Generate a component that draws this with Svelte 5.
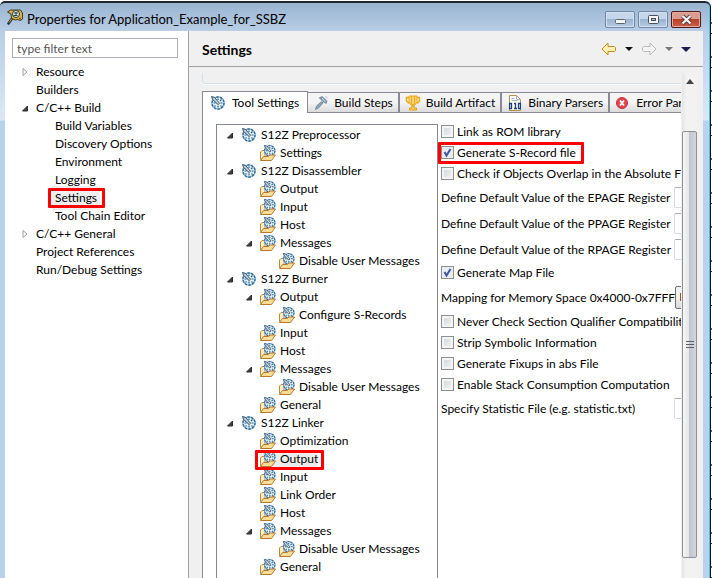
<script lang="ts">
	type Row = { label: string; level: number; open?: boolean; closed?: boolean; marked?: boolean };
	type Option = { id: string; kind: 'check' | 'text' | 'combo'; label: string; on?: boolean; marked?: boolean };

	let filter = $state('');

	const pages: Row[] = [
		{ label: 'Resource', level: 0, closed: true },
		{ label: 'Builders', level: 0 },
		{ label: 'C/C++ Build', level: 0, open: true },
		{ label: 'Build Variables', level: 1 },
		{ label: 'Discovery Options', level: 1 },
		{ label: 'Environment', level: 1 },
		{ label: 'Logging', level: 1 },
		{ label: 'Settings', level: 1, marked: true },
		{ label: 'Tool Chain Editor', level: 1 },
		{ label: 'C/C++ General', level: 0, closed: true },
		{ label: 'Project References', level: 0 },
		{ label: 'Run/Debug Settings', level: 0 }
	];

	const tools: Row[] = [
		{ label: 'S12Z Preprocessor', level: 0, open: true },
		{ label: 'Settings', level: 1 },
		{ label: 'S12Z Disassembler', level: 0, open: true },
		{ label: 'Output', level: 1 },
		{ label: 'Input', level: 1 },
		{ label: 'Host', level: 1 },
		{ label: 'Messages', level: 1, open: true },
		{ label: 'Disable User Messages', level: 2 },
		{ label: 'S12Z Burner', level: 0, open: true },
		{ label: 'Output', level: 1, open: true },
		{ label: 'Configure S-Records', level: 2 },
		{ label: 'Input', level: 1 },
		{ label: 'Host', level: 1 },
		{ label: 'Messages', level: 1, open: true },
		{ label: 'Disable User Messages', level: 2 },
		{ label: 'General', level: 1 },
		{ label: 'S12Z Linker', level: 0, open: true },
		{ label: 'Optimization', level: 1 },
		{ label: 'Output', level: 1, marked: true },
		{ label: 'Input', level: 1 },
		{ label: 'Link Order', level: 1 },
		{ label: 'Host', level: 1 },
		{ label: 'Messages', level: 1, open: true },
		{ label: 'Disable User Messages', level: 2 },
		{ label: 'General', level: 1 }
	];

	let options: Option[] = $state([
		{ id: 'rom', kind: 'check', label: 'Link as ROM library' },
		{ id: 'srec', kind: 'check', label: 'Generate S-Record file', on: true, marked: true },
		{ id: 'overlap', kind: 'check', label: 'Check if Objects Overlap in the Absolute File' },
		{ id: 'epage', kind: 'text', label: 'Define Default Value of the EPAGE Register' },
		{ id: 'ppage', kind: 'text', label: 'Define Default Value of the PPAGE Register' },
		{ id: 'rpage', kind: 'text', label: 'Define Default Value of the RPAGE Register' },
		{ id: 'map', kind: 'check', label: 'Generate Map File', on: true },
		{ id: 'space', kind: 'combo', label: 'Mapping for Memory Space 0x4000-0x7FFF' },
		{ id: 'qualifier', kind: 'check', label: 'Never Check Section Qualifier Compatibility' },
		{ id: 'strip', kind: 'check', label: 'Strip Symbolic Information' },
		{ id: 'fixups', kind: 'check', label: 'Generate Fixups in abs File' },
		{ id: 'stack', kind: 'check', label: 'Enable Stack Consumption Computation' },
		{ id: 'stat', kind: 'text', label: 'Specify Statistic File (e.g. statistic.txt)' }
	]);

	const tabs = [
		{ id: 'tool', label: 'Tool Settings' },
		{ id: 'steps', label: 'Build Steps' },
		{ id: 'artifact', label: 'Build Artifact' },
		{ id: 'binary', label: 'Binary Parsers' },
		{ id: 'error', label: 'Error Parsers' }
	];
	let tab = $state('tool');
</script>

{#snippet dial()}
	<circle cx="8" cy="8" r="6.200" fill="#e2f0f8" stroke="#86aeca" stroke-width="1.200" />
	<circle cx="8" cy="8" r="6" stroke="#2f6c96" stroke-width="1.400" stroke-dasharray="2.400 1.300" />
	<path d="M8 3.500v1.500M12.500 8h-2M8 12.500v-2M3.500 8h2M11.500 4.500l-1.500 1.500M11.500 11.500l-1-1M4.500 11.500l1-1" stroke="#2f668c" stroke-width="1.200" />
	<path d="M1.500 1.500l3 .8 5 6-1.500 1.200-5.500-5z" fill="#9db4c4" stroke="#2b4c66" stroke-width=".9" />
	<path d="M3.500 3l5 5.500" stroke="#fff" stroke-width=".7" />
{/snippet}

{#snippet toolIcon()}
	<svg class="icon" viewBox="0 0 16 16" aria-hidden="true">{@render dial()}</svg>
{/snippet}

{#snippet folderIcon()}
	<svg class="icon" viewBox="0 0 16 16" aria-hidden="true">
		<path d="M.5 14.500V7l1.500-1.500h3v9z" fill="#fdeec4" stroke="#c08a3c" />
		<g transform="translate(3 -1) scale(.85)">{@render dial()}</g>
		<path d="M.5 15.500L3.500 11.500h5l1.500-1.500h5.500L11.500 15.500z" fill="#f9dc98" stroke="#b9792c" stroke-linejoin="round" />
	</svg>
{/snippet}

{#snippet twisty(row: Row)}
	<span class="twisty">
		{#if row.open}
			<button type="button" aria-label="Collapse {row.label}">
				<svg viewBox="0 0 8 8"><path d="M6.500 2v5H1.500z" fill="#404040" stroke="#2c2c2c" /></svg>
			</button>
		{:else if row.closed}
			<button type="button" aria-label="Expand {row.label}">
				<svg viewBox="0 0 8 8"><path d="M2 .5v7L6 4z" fill="#fff" stroke="#a0a0a0" /></svg>
			</button>
		{/if}
	</span>
{/snippet}

<div class="desktop">
	<div class="dialog" role="dialog" aria-labelledby="title">
		<header class="titlebar">
			<svg class="app-icon" viewBox="0 0 16 16" aria-hidden="true">
				<path d="M1.500 14.500l3.500-5" stroke="#23313a" stroke-width="2.600" stroke-linecap="round" />
				<path d="M2 13.500l3-4" stroke="#d8a520" stroke-width="1" />
				<path d="M.5 3l3-2h10l2 3v6l-2 1.500-3-1-2 .5-4-1.500L4 5z" fill="#d9b13c" stroke="#3c3a22" />
				<circle cx="9" cy="5" r="3.500" fill="#e9edda" stroke="#2b3b43" />
				<path d="M7 4h4M9 3v4M6.500 6.500h4M12 9l2.500 1.500" stroke="#28404e" />
			</svg>
			<h1 id="title">Properties for Application_Example_for_SSBZ</h1>
			<div class="win-buttons">
				<button type="button" aria-label="Minimize">
					<svg viewBox="0 0 28 15"><rect x="9.500" y="7.500" width="10" height="4" rx="1" fill="#f5f5f5" stroke="#5a6673" /></svg>
				</button>
				<button type="button" aria-label="Maximize">
					<svg viewBox="0 0 28 15">
						<rect x="9.500" y="3.500" width="10" height="8" rx="1" fill="#f5f5f5" stroke="#46525f" />
						<rect x="12.500" y="6.500" width="4" height="2" fill="#9fb8d4" stroke="#46525f" />
					</svg>
				</button>
				<button type="button" class="close" aria-label="Close">
					<svg viewBox="0 0 28 15">
						<path d="M10.500 4l8 7.500M18.500 4l-8 7.500" stroke="#4d3b40" stroke-width="4" />
						<path d="M10.500 4l8 7.500M18.500 4l-8 7.500" stroke="#f4f4f4" stroke-width="2.300" />
					</svg>
				</button>
			</div>
		</header>

		<div class="body">
			<nav class="pages">
				<input class="filter" type="text" aria-label="Filter" placeholder="type filter text" bind:value={filter} />
				<ul class="tree">
					{#each pages as row}
						<li class="row level-{row.level}">
							{@render twisty(row)}
							<span class="label" class:marked={row.marked}>{row.label}</span>
						</li>
					{/each}
				</ul>
			</nav>

			<main>
				<div class="page-head">
					<h2>Settings</h2>
					<div class="history">
						<button type="button" aria-label="Back">
							<svg width="16" height="14" viewBox="0 0 16 14"><path d="M1 7l6-6v3.500h6.500l1 1v3l-1 1H7V13z" fill="#fdf0b4" stroke="#c08a1e" stroke-linejoin="round" /></svg>
						</button>
						<button type="button" aria-label="Back history">
							<svg width="8" height="14" viewBox="0 0 8 14"><path d="M0 5h8L4 9z" fill="#111" /></svg>
						</button>
						<button type="button" aria-label="Forward" disabled>
							<svg width="16" height="14" viewBox="0 0 16 14"><path d="M15 7L9 1v3.500H2.500l-1 1v3l1 1H9V13z" fill="#f4f4f4" stroke="#b9b9b9" stroke-linejoin="round" /></svg>
						</button>
						<button type="button" aria-label="Forward history" disabled>
							<svg width="8" height="14" viewBox="0 0 8 14"><path d="M0 5h8L4 9z" fill="#777" /></svg>
						</button>
						<button type="button" aria-label="View menu">
							<svg width="10" height="14" viewBox="0 0 10 14"><path d="M0 5h10L5 10z" fill="#1e1c50" /></svg>
						</button>
					</div>
				</div>

				<div class="scroller">
					<div class="content">
						<div class="group-end"></div>
						<div class="tabs" role="tablist">
							{#each tabs as t}
								<button type="button" role="tab" class="tab" class:selected={tab === t.id} aria-selected={tab === t.id} onclick={() => (tab = t.id)}>
									{#if t.id === 'tool'}
										{@render toolIcon()}
									{:else if t.id === 'steps'}
										<svg class="icon" viewBox="0 0 16 16" aria-hidden="true">
											<path d="M2.500 14.500l1-3.500 5-4.500 1.500 1.500-4.500 5z" fill="#8da2b3" stroke="#7890a3" />
											<path d="M5.500 3L9 1l3 2.500 2.500 2.500-1 3-3-1.500-3-3z" fill="#7d94a6" />
											<path d="M10 2l3.500 4.500M12.500 1l2.500 3" stroke="#8ea5b5" stroke-dasharray="1 1" />
											<path d="M9 3l3 3.500" stroke="#dfe8ee" />
										</svg>
									{:else if t.id === 'artifact'}
										<svg class="icon" viewBox="0 0 16 16" aria-hidden="true">
											<path d="M4 2.500H1.500V6L4 8.500M12 2.500h2.500V6L12 8.500" fill="none" stroke="#eba91f" stroke-width="1.500" />
											<path d="M4 1h8v6l-2 3H6L4 7z" fill="#fbd56b" stroke="#eba91f" />
											<path d="M6.500 1v8M9.500 1v8" stroke="#eba91f" />
											<path d="M7 10h2v3h2.500v2h-7v-2H7z" fill="#fbd56b" stroke="#e09b12" />
										</svg>
									{:else if t.id === 'binary'}
										<svg class="icon" viewBox="0 0 16 16" aria-hidden="true">
											<path d="M2.500.5h7l4 4v11h-11z" fill="#fffdf2" stroke="#b0914d" />
											<path d="M9.500.5v4h4M4.500 3.500h3M4.500 5.500h6" fill="none" stroke="#9fb4cc" />
											<rect x="1" y="8" width="14" height="6" fill="#fff" />
											<path d="M2.500 8.500h2v5h-2zM7 8.500h1.500v5M7 13.500h3M11.500 8.500h2v5h-2z" fill="none" stroke="#1f3f77" stroke-width="1.300" />
										</svg>
									{:else}
										<svg class="icon" viewBox="0 0 16 16" aria-hidden="true">
											<circle cx="7" cy="8" r="5.500" fill="#e0454f" stroke="#c9303b" />
											<path d="M5 5.500l4 5M9 5.500l-4 5" stroke="#fff" stroke-width="1.800" />
										</svg>
									{/if}
									<span>{t.label}</span>
								</button>
							{/each}
						</div>

						<div class="panel">
							<ul class="tree tools">
								{#each tools as row}
									<li class="row level-{row.level}">
										{@render twisty(row)}
										<span class="item" class:marked={row.marked}>
											{#if row.level === 0}{@render toolIcon()}{:else}{@render folderIcon()}{/if}
											<span class="label">{row.label}</span>
										</span>
									</li>
								{/each}
							</ul>

							<form class="options">
								{#each options as o}
									{#if o.kind === 'check'}
										<div class="check">
											<label class:marked={o.marked}>
												<input type="checkbox" bind:checked={o.on} />
												<span>{o.label}</span>
											</label>
										</div>
									{:else}
										<div class="field" class:combo={o.kind === 'combo'}>
											<label for={o.id}>{o.label}</label>
											{#if o.kind === 'text'}
												<input id={o.id} type="text" />
											{:else}
												<select id={o.id}><option>ROM</option></select>
											{/if}
										</div>
									{/if}
								{/each}
							</form>
						</div>
					</div>

					<div class="scrollbar" aria-hidden="true">
						<div class="arrow"><svg width="8" height="5" viewBox="0 0 8 5"><path d="M0 5h8L4 0z" fill="#444" /></svg></div>
						<div class="thumb">
							<svg width="8" height="9" viewBox="0 0 8 9"><path d="M0 1.500h8M0 4.500h8M0 7.500h8" stroke="#5c5c62" /></svg>
						</div>
					</div>
				</div>
			</main>
		</div>
	</div>
</div>

<style>
	:global(body) {
		margin: 0;
		background: #fff;
	}

	.desktop {
		box-sizing: border-box;
		height: 100vh;
		overflow: hidden;
		padding: 1px 1px 0 0;
		background: repeating-linear-gradient(#fff 0 22px, #4d6478 22px 24px, #fff 24px 33px, #333 33px 34px);
		font: 12px/18px Lato, 'Open Sans', sans-serif;
		color: #000;
	}
	.dialog {
		display: flex;
		flex-direction: column;
		box-sizing: border-box;
		height: 100%;
		border-top: 2px solid #20282c;
		border-right: 1px solid #05171c;
		border-radius: 5px 6px 0 0;
		background: linear-gradient(#99b4d1 0, #b9cde5 28px, #dce8f6 117px, #b9d1ea 118px);
		box-shadow: inset -1px 0 #4fc3df;
		overflow: hidden;
	}
	button {
		padding: 0;
		border: 0;
		background: none;
		font: inherit;
		color: inherit;
	}
	svg {
		display: block;
		flex: none;
		fill: none;
	}

	.titlebar {
		display: flex;
		align-items: center;
		height: 28px;
		flex: none;
		padding: 0 9px 0 7px;
	}
	.app-icon {
		width: 16px;
		height: 16px;
		margin-right: 4px;
	}
	h1 {
		flex: 1;
		margin: 0;
		padding-top: 4px;
		font-size: 13px;
		font-weight: 400;
		white-space: nowrap;
	}
	.win-buttons {
		display: flex;
		gap: 3px;
		padding-top: 4px;
	}
	.win-buttons button {
		width: 30px;
		height: 17px;
		border: 1px solid #6f87a3;
		border-radius: 2px;
		background: linear-gradient(#c5d6ea 0 45%, #9ab3d0 50%, #b5cbe4);
		box-shadow: inset 0 0 0 1px #d3e1f1;
	}
	.win-buttons .close {
		border-color: #4e1a1a;
		background: linear-gradient(#dc9c8d 0 45%, #bb3f25 50%, #c9604a);
		box-shadow: inset 0 0 0 1px #e3ab9f;
	}

	.body {
		display: flex;
		flex: 1;
		min-height: 0;
		margin: 0 7px 0 5px;
		background: #f0f0f0;
	}
	.pages {
		box-sizing: border-box;
		flex: 0 0 184px;
		padding: 7px 10px 0 7px;
		border-right: 1px solid #a0a0a0;
		background: #fff;
	}
	.filter {
		box-sizing: border-box;
		width: 100%;
		height: 20px;
		margin-bottom: 5px;
		padding: 0 4px;
		border: 1px solid #abadb3;
		font: inherit;
	}
	.filter::placeholder {
		color: #555;
	}
	.tree {
		margin: 0;
		padding: 0;
		list-style: none;
	}
	.row {
		display: flex;
		align-items: center;
		height: 18px;
		white-space: nowrap;
	}
	.twisty {
		flex: none;
		width: 15px;
		padding-left: 9px;
	}
	.twisty svg {
		width: 8px;
		height: 8px;
	}
	.level-1 {
		padding-left: 19px;
	}
	.level-2 {
		padding-left: 38px;
	}
	.icon {
		width: 16px;
		height: 16px;
	}
	.marked {
		position: relative;
	}
	.marked::after {
		content: '';
		position: absolute;
		inset: -1px -8px -1px -7px;
		border: 3px solid #f00;
		border-radius: 1px;
	}
	.pages .marked {
		background: #eee;
		box-shadow: 0 0 0 3px #eee;
	}

	main {
		display: flex;
		flex: 1;
		flex-direction: column;
		min-width: 0;
	}
	.page-head {
		display: flex;
		flex: none;
		align-items: center;
		justify-content: space-between;
		height: 35px;
		padding: 0 12px 0 13px;
		border-bottom: 1px solid #a0a0a0;
	}
	h2 {
		margin: 0;
		padding-top: 3px;
		font-size: 14px;
		font-weight: 700;
	}
	.history {
		display: flex;
		gap: 8px;
	}

	.scroller {
		display: flex;
		flex: 1;
		min-height: 0;
		padding: 6px 6px 0 13px;
	}
	.content {
		flex: 1;
		min-width: 0;
		overflow: hidden;
	}
	.group-end {
		height: 10px;
		margin-bottom: 7px;
		border: solid #d5dfe5;
		border-width: 0 0 1px 1px;
		border-radius: 0 0 0 3px;
		box-shadow: 0 1px #fff;
	}
	.tabs {
		display: flex;
		align-items: flex-end;
		height: 22px;
	}
	.tab {
		display: flex;
		box-sizing: border-box;
		flex: none;
		align-items: center;
		gap: 5px;
		height: 21px;
		padding: 0 5px;
		border: 1px solid #8a8a94;
		border-left-width: 0;
		border-right-width: 2px;
		background: linear-gradient(#f4f4f4 50%, #dcdcdc);
		white-space: nowrap;
	}
	.tab.selected {
		gap: 6px;
		height: 22px;
		padding: 0 8px 0 7px;
		border-width: 1px 1px 0;
		background: #fff;
	}
	.panel {
		display: flex;
		padding: 11px 0 20px 13px;
		border-left: 1px solid #8a8a94;
		background: #fff;
	}
	.tools {
		box-sizing: border-box;
		flex: 0 0 222px;
		padding: 1px 0 20px;
		border: 1px solid #828790;
	}
	.item {
		display: flex;
		align-items: center;
		gap: 4px;
	}
	.item.marked {
		background: #ececec;
	}
	.item.marked::after {
		inset: 0 -6px -2px -5px;
	}

	.options {
		flex: 1;
		min-width: 0;
		margin-top: -3px;
		padding-left: 3px;
	}
	.check {
		display: flex;
		align-items: center;
		height: 21px;
		white-space: nowrap;
	}
	.check label {
		display: flex;
		align-items: center;
		gap: 3px;
	}
	.check .marked::after {
		inset: -2px -8px -2px -3px;
	}
	.check input {
		appearance: none;
		flex: none;
		width: 13px;
		height: 13px;
		margin: 0;
		border: 1px solid #8e8f8f;
		background: linear-gradient(135deg, #cfd3d8, #f6f6f6) padding-box;
		box-shadow: inset 0 0 0 2px #f4f4f4;
	}
	.check input:checked {
		background: url("data:image/svg+xml,%3Csvg xmlns='http://www.w3.org/2000/svg' viewBox='0 0 11 11'%3E%3Cpath d='M2.500 5l2 3.500L8.500 2' fill='none' stroke='%233f579b' stroke-width='2'/%3E%3C/svg%3E") #e9ecf1;
		box-shadow: none;
	}
	.field {
		display: flex;
		align-items: center;
		height: 26px;
		white-space: nowrap;
	}
	.field.combo {
		height: 28px;
	}
	.field label {
		flex: 0 0 233px;
		padding-top: 2px;
	}
	.field input,
	.field select {
		box-sizing: border-box;
		flex: 1 0 120px;
		height: 21px;
		border: 1px solid #d5d9e2;
		border-top-color: #abadb3;
		border-radius: 2px;
		background: #fff;
		font: inherit;
	}
	.field select {
		appearance: none;
		height: 23px;
		padding: 0 3px;
		border-color: #707070;
		background: linear-gradient(#f2f2f2 50%, #d8d8d8);
	}

	.scrollbar {
		display: flex;
		flex: 0 0 15px;
		flex-direction: column;
		margin-left: 1px;
		background: linear-gradient(90deg, #e6e6e6, #f2f2f2 30%);
	}
	.arrow {
		display: flex;
		flex: 0 0 17px;
		align-items: center;
		justify-content: center;
		margin-bottom: 41px;
	}
	.thumb {
		display: flex;
		flex: 1;
		align-items: center;
		justify-content: center;
		margin-bottom: 20px;
		border: 1px solid #8f8f96;
		border-radius: 2px;
		background: linear-gradient(90deg, #f7f7f8, #e4e5e8 45%, #c3c6cd 50%, #d3d5db);
	}
</style>
